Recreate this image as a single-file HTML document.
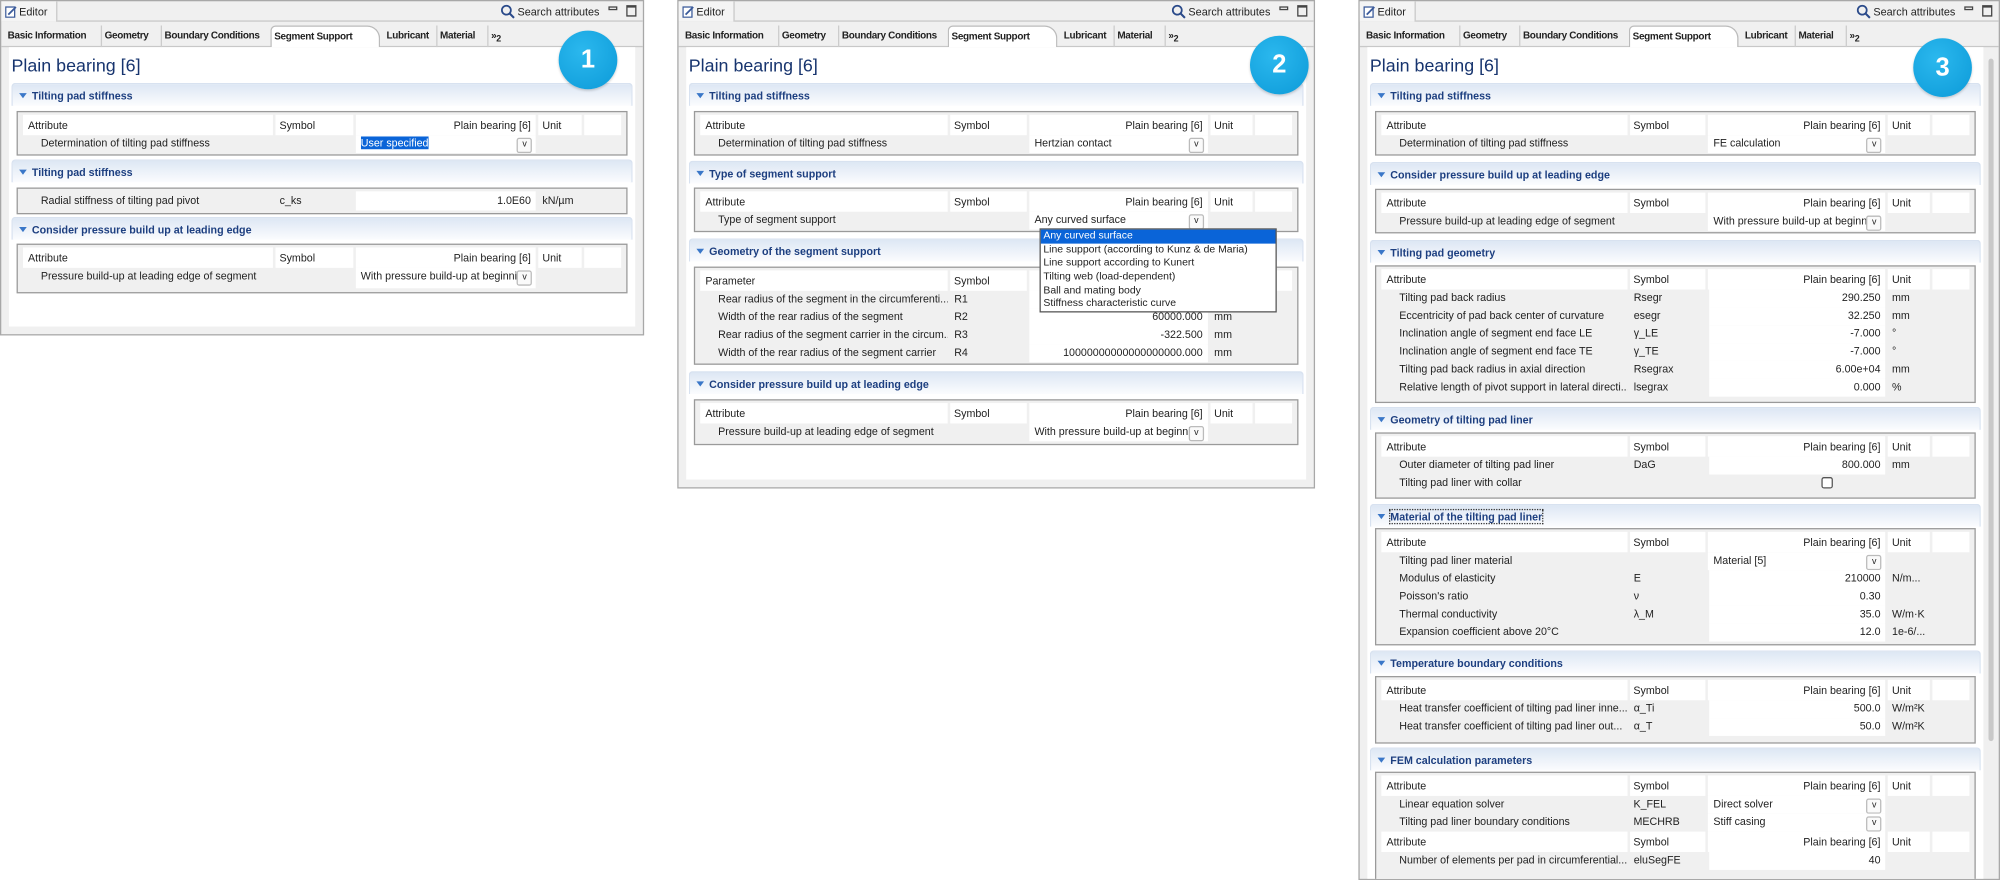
<!DOCTYPE html>
<html><head><meta charset="utf-8"><style>
*{box-sizing:border-box;margin:0;padding:0}
body{width:2000px;height:874px;background:#fff;overflow:hidden;font-family:"Liberation Sans",sans-serif;font-size:8.4px;color:#222}
#wrap{position:absolute;left:0;top:0;width:1568px;height:686px;transform:scale(1.2755);transform-origin:0 0}
.panel{position:absolute;top:0;border:1px solid #a8a8a8;background:#f0f0f0;overflow:hidden}
.top{position:absolute;left:0;right:0;top:0;height:16px;border-bottom:1px solid #c8c8c8}
.etab{position:absolute;left:0;top:0;height:16px;width:44px;border-right:1px solid #c8c8c8;background:#f4f4f4;padding:3px 0 0 14px;font-size:8.5px}
.etab svg{position:absolute;left:3px;top:3px}
.search{position:absolute;right:34px;top:3px;font-size:8.5px}
.search svg{position:absolute;left:-14px;top:-1px}
.mm{position:absolute;right:20px;top:4px;width:7px;height:3px;border:1px solid #444}
.mx{position:absolute;right:5px;top:3px;width:8px;height:9px;border:1px solid #444;border-top-width:2px}
.tabs{position:absolute;left:0;right:0;top:16px;height:20px;border-bottom:1px solid #c8c8c8}
.tab{position:absolute;top:3px;height:17px;padding:3px 2px 0;font-weight:bold;font-size:7.8px;border-left:1px solid #ccc;letter-spacing:-0.25px;white-space:nowrap}
.tab.act{background:#fff;border:1px solid #bbb;border-bottom:none;border-radius:4px 10px 0 0;width:86px}
.content{position:absolute;left:6px;right:6px;top:36px;bottom:6px;background:#fff}
.title{position:absolute;left:2px;top:6px;font-size:14px;color:#17346e}
.sh{position:absolute;left:2px;right:2px;height:18px;border:1px solid #d8e2f0;border-bottom:none;border-radius:3px 3px 0 0;background:linear-gradient(#dde7f4,#fbfcfe);font-weight:bold;color:#1d3f80;font-size:8.4px;padding:4px 0 0 15px}
.sh:before{content:"";position:absolute;left:5px;top:7px;border-left:3px solid transparent;border-right:3px solid transparent;border-top:4px solid #3a77c8}
.box{position:absolute;left:6px;right:6px;border:1px solid #9a9a9a;background:#f0f0f0;padding:2px 4px}
.r{display:flex;height:13.5px;line-height:13.5px;margin-bottom:0.5px}
.r.h{height:16px;line-height:16px;margin-bottom:0}
.r div{overflow:hidden;white-space:nowrap}
.a{width:200px;padding-left:4px;margin-right:2px}
.r:not(.h) .a{padding-left:14px}
.s{width:62px;padding-left:3px;margin-right:2px}
.v{width:144px;margin-right:2px;padding:0 4px;text-align:right;position:relative;background:#fff}
.u{width:34px;padding-left:3px;margin-right:2px}
.x{width:30px}
.r.h div{background:#fff}
.v.dd{text-align:left;padding-right:16px}
.v.dd:after{content:"v";position:absolute;right:3px;top:2px;width:10px;height:10px;border:1px solid #bbb;border-radius:2px;font-size:7px;line-height:9px;text-align:center;background:#fafafa}
.badge{position:absolute;width:46px;height:46px;border-radius:50%;background:radial-gradient(circle at 40% 35%,#2bb8ee,#0c9ad8);color:#fff;font-weight:bold;font-size:20px;text-align:center;line-height:46px;box-shadow:0 1px 2px rgba(0,0,0,.2)}
.list{position:absolute;left:815px;top:179px;width:186px;height:66px;border:1px solid #555;background:#fff;font-size:8.2px;z-index:5}
.list div{height:10.7px;line-height:10.7px;padding-left:2px;white-space:nowrap}
.list .sel{background:#0a64d8;color:#fff}
</style></head><body><div id="wrap">

<!-- PANEL 1 -->
<div class="panel" style="left:0;width:505px;height:263px">
 <div class="top"><div class="etab"><svg width="10" height="10" viewBox="0 0 10 10"><rect x="0.5" y="1.5" width="7" height="8" fill="#fff" stroke="#3a5a9a"/><path d="M2 7 L8 1 L9 2 L3 8 Z" fill="#3a5a9a"/></svg>Editor</div><div class="search"><svg width="12" height="12" viewBox="0 0 12 12"><circle cx="5" cy="5" r="3.5" fill="none" stroke="#2a4a8a" stroke-width="1.4"/><path d="M7.5 7.5 L11 11" stroke="#2a4a8a" stroke-width="1.6"/></svg>Search attributes</div><div class="mm"></div><div class="mx"></div></div>
 <div class="tabs"><div class="tab" style="left:3px;border-left:none">Basic Information</div><div class="tab" style="left:78px">Geometry</div><div class="tab" style="left:125px">Boundary Conditions</div><div class="tab act" style="left:211px">Segment Support</div><div class="tab" style="left:300px;border-left:none">Lubricant</div><div class="tab" style="left:341px">Material</div><div class="tab" style="left:381px">»<sub style="font-size:7px">2</sub></div></div>
 <div class="content">
  <div class="title">Plain bearing [6]</div>
  <div class="sh" style="top:28px">Tilting pad stiffness</div>
  <div class="box" style="top:50px;height:35px"><div class="r h"><div class="a">Attribute</div><div class="s">Symbol</div><div class="v">Plain bearing [6]</div><div class="u">Unit</div><div class="x"></div></div><div class="r"><div class="a">Determination of tilting pad stiffness</div><div class="s"></div><div class="v dd"><span style="background:#0a64d8;color:#fff">User specified</span></div><div class="u"></div><div class="x"></div></div></div>
  <div class="sh" style="top:88px">Tilting pad stiffness</div>
  <div class="box" style="top:110px;height:21px"><div class="r" style="height:15px;line-height:15px"><div class="a">Radial stiffness of tilting pad pivot</div><div class="s">c_ks</div><div class="v">1.0E60</div><div class="u">kN/µm</div><div class="x"></div></div></div>
  <div class="sh" style="top:133px">Consider pressure build up at leading edge</div>
  <div class="box" style="top:154px;height:39px"><div class="r h"><div class="a">Attribute</div><div class="s">Symbol</div><div class="v">Plain bearing [6]</div><div class="u">Unit</div><div class="x"></div></div><div class="r" style="height:16px"><div class="a">Pressure build-up at leading edge of segment</div><div class="s"></div><div class="v dd">With pressure build-up at beginni</div><div class="u"></div><div class="x"></div></div></div>
 </div>
 <div class="badge" style="left:437px;top:23px">1</div>
</div>

<!-- PANEL 2 -->
<div class="panel" style="left:531px;width:500px;height:383px">
 <div class="top"><div class="etab"><svg width="10" height="10" viewBox="0 0 10 10"><rect x="0.5" y="1.5" width="7" height="8" fill="#fff" stroke="#3a5a9a"/><path d="M2 7 L8 1 L9 2 L3 8 Z" fill="#3a5a9a"/></svg>Editor</div><div class="search"><svg width="12" height="12" viewBox="0 0 12 12"><circle cx="5" cy="5" r="3.5" fill="none" stroke="#2a4a8a" stroke-width="1.4"/><path d="M7.5 7.5 L11 11" stroke="#2a4a8a" stroke-width="1.6"/></svg>Search attributes</div><div class="mm"></div><div class="mx"></div></div>
 <div class="tabs"><div class="tab" style="left:3px;border-left:none">Basic Information</div><div class="tab" style="left:78px">Geometry</div><div class="tab" style="left:125px">Boundary Conditions</div><div class="tab act" style="left:211px">Segment Support</div><div class="tab" style="left:300px;border-left:none">Lubricant</div><div class="tab" style="left:341px">Material</div><div class="tab" style="left:381px">»<sub style="font-size:7px">2</sub></div></div>
 <div class="content">
  <div class="title">Plain bearing [6]</div>
  <div class="sh" style="top:28px">Tilting pad stiffness</div>
  <div class="box" style="top:50px;height:35px"><div class="r h"><div class="a">Attribute</div><div class="s">Symbol</div><div class="v">Plain bearing [6]</div><div class="u">Unit</div><div class="x"></div></div><div class="r"><div class="a">Determination of tilting pad stiffness</div><div class="s"></div><div class="v dd">Hertzian contact</div><div class="u"></div><div class="x"></div></div></div>
  <div class="sh" style="top:89px">Type of segment support</div>
  <div class="box" style="top:110px;height:35px"><div class="r h"><div class="a">Attribute</div><div class="s">Symbol</div><div class="v">Plain bearing [6]</div><div class="u">Unit</div><div class="x"></div></div><div class="r"><div class="a">Type of segment support</div><div class="s"></div><div class="v dd">Any curved surface</div><div class="u"></div><div class="x"></div></div></div>
  <div class="sh" style="top:150px">Geometry of the segment support</div>
  <div class="box" style="top:172px;height:77px"><div class="r h"><div class="a">Parameter</div><div class="s">Symbol</div><div class="v">Plain bearing [6]</div><div class="u">Unit</div><div class="x"></div></div>
   <div class="r"><div class="a">Rear radius of the segment in the circumferenti...</div><div class="s">R1</div><div class="v"></div><div class="u">mm</div><div class="x"></div></div>
   <div class="r"><div class="a">Width of the rear radius of the segment</div><div class="s">R2</div><div class="v">60000.000</div><div class="u">mm</div><div class="x"></div></div>
   <div class="r"><div class="a">Rear radius of the segment carrier in the circum...</div><div class="s">R3</div><div class="v">-322.500</div><div class="u">mm</div><div class="x"></div></div>
   <div class="r"><div class="a">Width of the rear radius of the segment carrier</div><div class="s">R4</div><div class="v">10000000000000000000.000</div><div class="u">mm</div><div class="x"></div></div></div>
  <div class="sh" style="top:254px">Consider pressure build up at leading edge</div>
  <div class="box" style="top:276px;height:36px"><div class="r h"><div class="a">Attribute</div><div class="s">Symbol</div><div class="v">Plain bearing [6]</div><div class="u">Unit</div><div class="x"></div></div><div class="r" style="height:14px"><div class="a">Pressure build-up at leading edge of segment</div><div class="s"></div><div class="v dd">With pressure build-up at beginni</div><div class="u"></div><div class="x"></div></div></div>
 </div>
 <div class="badge" style="left:448px;top:27px">2</div>
</div>
<div class="list"><div class="sel">Any curved surface</div><div>Line support (according to Kunz &amp; de Maria)</div><div>Line support according to Kunert</div><div>Tilting web (load-dependent)</div><div>Ball and mating body</div><div>Stiffness characteristic curve</div></div>

<!-- PANEL 3 -->
<div class="panel" style="left:1065px;width:503px;height:690px">
 <div class="top"><div class="etab"><svg width="10" height="10" viewBox="0 0 10 10"><rect x="0.5" y="1.5" width="7" height="8" fill="#fff" stroke="#3a5a9a"/><path d="M2 7 L8 1 L9 2 L3 8 Z" fill="#3a5a9a"/></svg>Editor</div><div class="search"><svg width="12" height="12" viewBox="0 0 12 12"><circle cx="5" cy="5" r="3.5" fill="none" stroke="#2a4a8a" stroke-width="1.4"/><path d="M7.5 7.5 L11 11" stroke="#2a4a8a" stroke-width="1.6"/></svg>Search attributes</div><div class="mm"></div><div class="mx"></div></div>
 <div class="tabs"><div class="tab" style="left:3px;border-left:none">Basic Information</div><div class="tab" style="left:78px">Geometry</div><div class="tab" style="left:125px">Boundary Conditions</div><div class="tab act" style="left:211px">Segment Support</div><div class="tab" style="left:300px;border-left:none">Lubricant</div><div class="tab" style="left:341px">Material</div><div class="tab" style="left:381px">»<sub style="font-size:7px">2</sub></div></div>
 <div class="content" style="bottom:0;right:12px">
  <div class="title">Plain bearing [6]</div>
  <div class="sh" style="top:28px">Tilting pad stiffness</div>
  <div class="box" style="top:50px;height:35px"><div class="r h"><div class="a">Attribute</div><div class="s">Symbol</div><div class="v">Plain bearing [6]</div><div class="u">Unit</div><div class="x"></div></div><div class="r"><div class="a">Determination of tilting pad stiffness</div><div class="s"></div><div class="v dd">FE calculation</div><div class="u"></div><div class="x"></div></div></div>
  <div class="sh" style="top:90px">Consider pressure build up at leading edge</div>
  <div class="box" style="top:111px;height:35px"><div class="r h"><div class="a">Attribute</div><div class="s">Symbol</div><div class="v">Plain bearing [6]</div><div class="u">Unit</div><div class="x"></div></div><div class="r"><div class="a">Pressure build-up at leading edge of segment</div><div class="s"></div><div class="v dd">With pressure build-up at beginni</div><div class="u"></div><div class="x"></div></div></div>
  <div class="sh" style="top:151px">Tilting pad geometry</div>
  <div class="box" style="top:171px;height:108px"><div class="r h"><div class="a">Attribute</div><div class="s">Symbol</div><div class="v">Plain bearing [6]</div><div class="u">Unit</div><div class="x"></div></div>
   <div class="r"><div class="a">Tilting pad back radius</div><div class="s">Rsegr</div><div class="v">290.250</div><div class="u">mm</div><div class="x"></div></div>
   <div class="r"><div class="a">Eccentricity of pad back center of curvature</div><div class="s">esegr</div><div class="v">32.250</div><div class="u">mm</div><div class="x"></div></div>
   <div class="r"><div class="a">Inclination angle of segment end face LE</div><div class="s">γ_LE</div><div class="v">-7.000</div><div class="u">°</div><div class="x"></div></div>
   <div class="r"><div class="a">Inclination angle of segment end face TE</div><div class="s">γ_TE</div><div class="v">-7.000</div><div class="u">°</div><div class="x"></div></div>
   <div class="r"><div class="a">Tilting pad back radius in axial direction</div><div class="s">Rsegrax</div><div class="v">6.00e+04</div><div class="u">mm</div><div class="x"></div></div>
   <div class="r"><div class="a">Relative length of pivot support in lateral directi...</div><div class="s">lsegrax</div><div class="v">0.000</div><div class="u">%</div><div class="x"></div></div></div>
  <div class="sh" style="top:282px">Geometry of tilting pad liner</div>
  <div class="box" style="top:302px;height:52px"><div class="r h"><div class="a">Attribute</div><div class="s">Symbol</div><div class="v">Plain bearing [6]</div><div class="u">Unit</div><div class="x"></div></div>
   <div class="r"><div class="a">Outer diameter of tilting pad liner</div><div class="s">DaG</div><div class="v">800.000</div><div class="u">mm</div><div class="x"></div></div>
   <div class="r"><div class="a">Tilting pad liner with collar</div><div class="s"></div><div class="v" style="background:#f0f0f0"><span style="position:absolute;left:88px;top:2px;width:9px;height:9px;border:1px solid #555;border-radius:2px;background:#fff"></span></div><div class="u"></div><div class="x"></div></div></div>
  <div class="sh" style="top:358px"><span style="outline:1px dotted #333">Material of the tilting pad liner</span></div>
  <div class="box" style="top:377px;height:92px"><div class="r h"><div class="a">Attribute</div><div class="s">Symbol</div><div class="v">Plain bearing [6]</div><div class="u">Unit</div><div class="x"></div></div>
   <div class="r"><div class="a">Tilting pad liner material</div><div class="s"></div><div class="v dd">Material [5]</div><div class="u"></div><div class="x"></div></div>
   <div class="r"><div class="a">Modulus of elasticity</div><div class="s">E</div><div class="v">210000</div><div class="u">N/m...</div><div class="x"></div></div>
   <div class="r"><div class="a">Poisson's ratio</div><div class="s">ν</div><div class="v">0.30</div><div class="u"></div><div class="x"></div></div>
   <div class="r"><div class="a">Thermal conductivity</div><div class="s">λ_M</div><div class="v">35.0</div><div class="u">W/m·K</div><div class="x"></div></div>
   <div class="r"><div class="a">Expansion coefficient above 20°C</div><div class="s"></div><div class="v">12.0</div><div class="u">1e-6/...</div><div class="x"></div></div></div>
  <div class="sh" style="top:473px">Temperature boundary conditions</div>
  <div class="box" style="top:493px;height:53px"><div class="r h"><div class="a">Attribute</div><div class="s">Symbol</div><div class="v">Plain bearing [6]</div><div class="u">Unit</div><div class="x"></div></div>
   <div class="r"><div class="a">Heat transfer coefficient of tilting pad liner inne...</div><div class="s">α_Ti</div><div class="v">500.0</div><div class="u">W/m²K</div><div class="x"></div></div>
   <div class="r"><div class="a">Heat transfer coefficient of tilting pad liner out...</div><div class="s">α_T</div><div class="v">50.0</div><div class="u">W/m²K</div><div class="x"></div></div></div>
  <div class="sh" style="top:549px">FEM calculation parameters</div>
  <div class="box" style="top:568px;height:90px"><div class="r h"><div class="a">Attribute</div><div class="s">Symbol</div><div class="v">Plain bearing [6]</div><div class="u">Unit</div><div class="x"></div></div>
   <div class="r"><div class="a">Linear equation solver</div><div class="s">K_FEL</div><div class="v dd">Direct solver</div><div class="u"></div><div class="x"></div></div>
   <div class="r"><div class="a">Tilting pad liner boundary conditions</div><div class="s">MECHRB</div><div class="v dd">Stiff casing</div><div class="u"></div><div class="x"></div></div>
   <div class="r h"><div class="a">Attribute</div><div class="s">Symbol</div><div class="v">Plain bearing [6]</div><div class="u">Unit</div><div class="x"></div></div>
   <div class="r"><div class="a">Number of elements per pad in circumferential...</div><div class="s">eluSegFE</div><div class="v">40</div><div class="u"></div><div class="x"></div></div></div>
 </div>
 <div style="position:absolute;right:4px;top:45px;width:4px;height:535px;background:#c8c8c8;border-radius:2px"></div>
 <div class="badge" style="left:434px;top:29px">3</div>
</div>

</div></body></html>
